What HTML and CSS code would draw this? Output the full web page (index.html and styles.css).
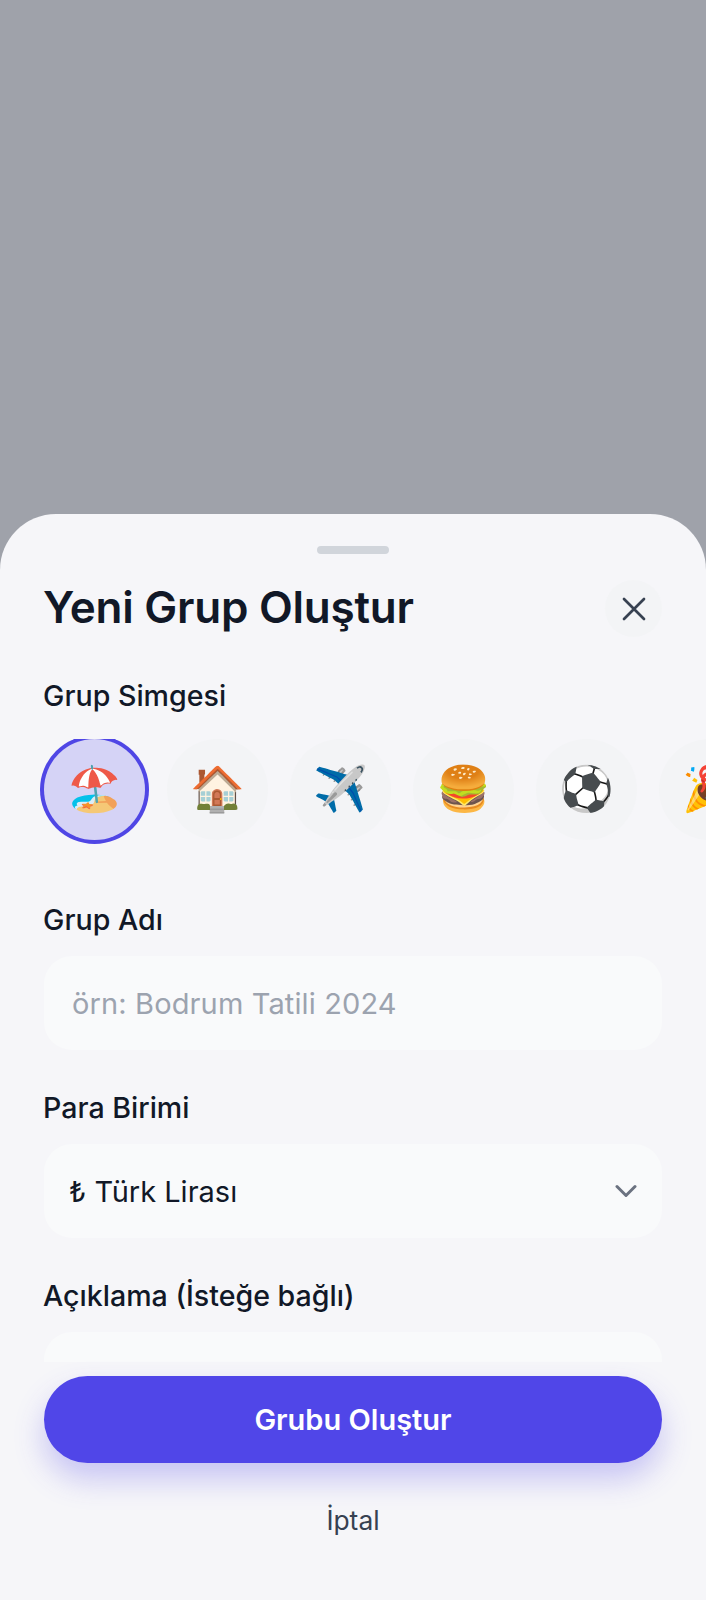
FILE: index.html
```html
<!DOCTYPE html>
<html lang="tr">
<head>
<meta charset="utf-8">
<title>Yeni Grup Oluştur</title>
<link rel="stylesheet" href="styles.css">
</head>
<body>
<div class="screen">
  <div class="backdrop"></div>
  <section class="sheet">
    <div class="handle-wrap"><div class="handle"></div></div>
    <header class="head">
      <h1 class="title">Yeni Grup Oluştur</h1>
      <button class="close" type="button" aria-label="Kapat">
        <svg width="24" height="24" viewBox="0 0 24 24" fill="none" stroke="#374151" stroke-width="2.7" stroke-linecap="round"><path d="M2 2 22 22M22 2 2 22"/></svg>
      </button>
    </header>
    <div class="body">
      <div class="label first">Grup Simgesi</div>
      <div class="icons">
        <div class="ic sel">🏖️</div>
        <div class="ic">🏠</div>
        <div class="ic">✈️</div>
        <div class="ic">🍔</div>
        <div class="ic">⚽</div>
        <div class="ic">🎉</div>
      </div>
      <div class="label l-name">Grup Adı</div>
      <div class="field ph">örn: Bodrum Tatili 2024</div>
      <div class="label l-next">Para Birimi</div>
      <div class="field select"><span>₺ Türk Lirası</span>
        <svg width="22" height="14" viewBox="0 0 22 14" fill="none" stroke="#6b7280" stroke-width="3" stroke-linecap="round" stroke-linejoin="round"><path d="M2 2.500 11 11.500 20 2.500"/></svg>
      </div>
      <div class="label l-next">Açıklama (İsteğe bağlı)</div>
      <div class="field area"></div>
    </div>
    <footer class="foot">
      <button class="primary" type="button">Grubu Oluştur</button>
      <button class="cancel" type="button">İptal</button>
    </footer>
  </section>
</div>
</body>
</html>
```
FILE: styles.css
```css
* { box-sizing: border-box; }
html, body { margin: 0; padding: 0; }
body { font-family: Inter, "Liberation Sans", sans-serif; background: #9fa2aa; }
.screen { width: 706px; height: 1600px; display: flex; flex-direction: column; overflow: hidden; }
.backdrop { height: 514px; flex: none; background: #9fa2aa; }
.sheet { flex: 1; display: flex; flex-direction: column; background: #f6f6f9; border-radius: 56px 56px 0 0; min-height: 0; }
.handle-wrap { display: flex; justify-content: center; padding-top: 32px; }
.handle { width: 72px; height: 8px; border-radius: 4px; background: #d1d5db; }
.head { display: flex; align-items: center; justify-content: space-between; margin-top: 26px; padding: 0 44px; }
.title { margin: 0 0 4px -1px; font-size: 44px; line-height: 52px; font-weight: 600; color: #111827; letter-spacing: -0.25px; }
.close { width: 57px; height: 57px; border: 0; border-radius: 50%; background: #f3f4f6; display: flex; align-items: center; justify-content: center; padding: 0; }
.body { flex: none; height: 725px; overflow: hidden; padding: 0 44px; }
.label { font-size: 28.6px; line-height: 36px; font-weight: 500; color: #111827; margin-left: -1px; }
.first { margin-top: 41px; }
.icons { display: flex; gap: 22px; margin: 25px -44px 0; padding: 0 0 40px 44px; overflow: hidden; }
.ic { flex: none; width: 101px; height: 101px; padding-bottom: 3px; border-radius: 50%; background: #f3f4f6; display: flex; align-items: center; justify-content: center; font-size: 44px; }
.sel { background: #d5d3f6; box-shadow: 0 0 0 4px #4f46e5; }
.l-name { margin-top: 22px; }
.l-next { margin-top: 40px; }
.field { margin-top: 18px; height: 94px; border-radius: 28px; background: #f9fafb; display: flex; align-items: center; padding: 0 28px; font-size: 29px; color: #111827; }
.ph { color: #9ca3af; letter-spacing: 0.13px; }
.select { justify-content: space-between; padding-left: 25px; padding-right: 25px; }
.foot { display: flex; flex-direction: column; align-items: stretch; padding: 14px 44px 0; }
.primary { height: 87px; border: 0; border-radius: 44px; background: #5046e8; color: #fff; font: 600 29px Inter, sans-serif; box-shadow: 0 16px 30px rgba(79,70,229,.28); }
.cancel { margin-top: 39px; border: 0; background: none; padding: 0; font: 400 26.4px/36px Inter, sans-serif; color: #374151; }
```
